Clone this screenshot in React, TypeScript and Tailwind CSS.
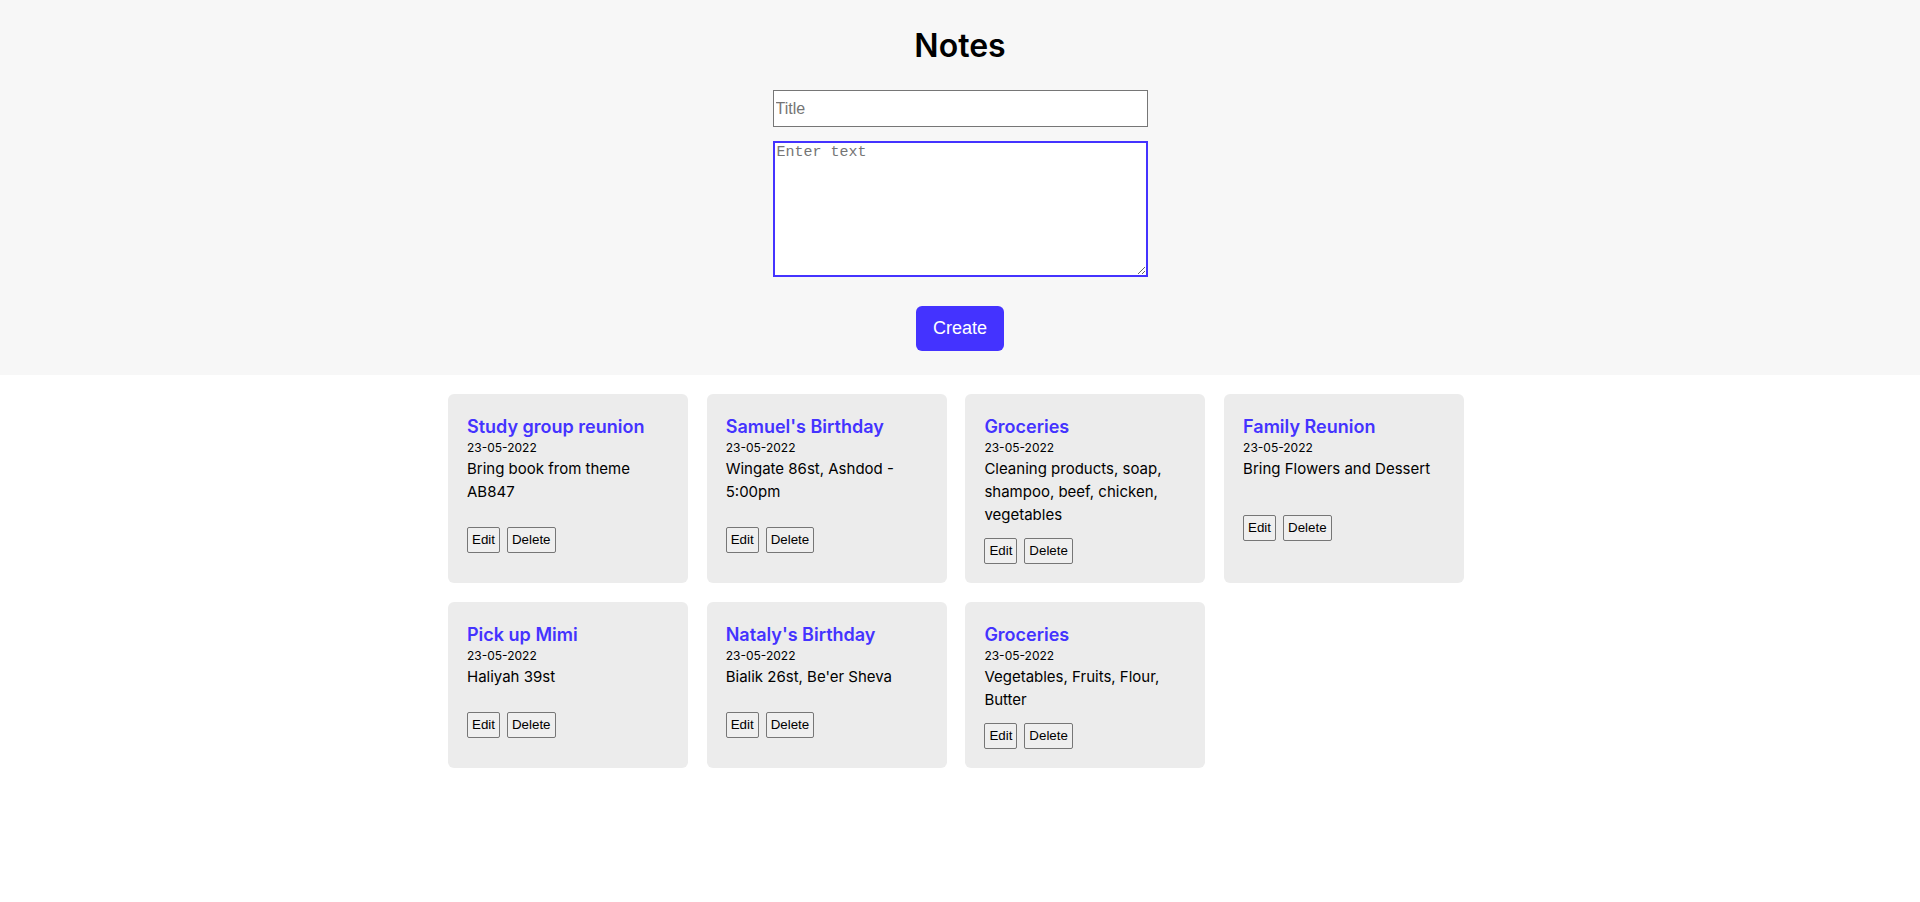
import React from 'react';

interface Note {
  id: number;
  title: string;
  date: string;
  text: string;
}

const notes: Note[] = [
  { id: 1, title: 'Study group reunion', date: '23-05-2022', text: 'Bring book from theme AB847' },
  { id: 2, title: "Samuel's Birthday", date: '23-05-2022', text: 'Wingate 86st, Ashdod - 5:00pm' },
  { id: 3, title: 'Groceries', date: '23-05-2022', text: 'Cleaning products, soap, shampoo, beef, chicken, vegetables' },
  { id: 4, title: 'Family Reunion', date: '23-05-2022', text: 'Bring Flowers and Dessert' },
  { id: 5, title: 'Pick up Mimi', date: '23-05-2022', text: 'Haliyah 39st' },
  { id: 6, title: "Nataly's Birthday", date: '23-05-2022', text: "Bialik 26st, Be'er Sheva" },
  { id: 7, title: 'Groceries', date: '23-05-2022', text: 'Vegetables, Fruits, Flour, Butter' },
];

const NoteCard: React.FC<{ note: Note }> = ({ note }) => {
  return (
    <div className="w-[240px] bg-[#ececec] rounded-[6px] px-[19px] pt-[21px] pb-[19px] flex flex-col">
      <div>
        <h3 className="text-[18px] leading-[24px] font-semibold text-[#4433ff]">{note.title}</h3>
        <p className="text-[12px] leading-[18px] text-black">{note.date}</p>
        <p className="text-[15px] leading-[23px] text-black">{note.text}</p>
      </div>
      {/* buttons sit centered in whatever space is left */}
      <div className="my-auto pt-[12px] flex gap-[7px] font-['Liberation_Sans',Arial,sans-serif]">
        <button className="h-[26px] px-[4px] text-[13.33px] text-black bg-[#efefef] border border-[#767676] rounded-[2px]">
          Edit
        </button>
        <button className="h-[26px] px-[4px] text-[13.33px] text-black bg-[#efefef] border border-[#767676] rounded-[2px]">
          Delete
        </button>
      </div>
    </div>
  );
};

export default function App() {
  return (
    <div className="min-h-screen bg-white font-['Inter','Noto_Sans',sans-serif]">
      {/* Form */}
      <div className="bg-[#f7f7f7] h-[375px] flex flex-col items-center pt-[26px]">
        <h1 className="text-[32px] leading-[40px] font-semibold text-black">Notes</h1>
        <input
          type="text"
          placeholder="Title"
          className="mt-[24px] w-[375px] h-[37px] px-[2px] bg-white border border-[#767676] text-[16px] font-['Liberation_Sans',Arial,sans-serif] placeholder:text-[#757575] outline-none"
        />
        <textarea
          placeholder="Enter text"
          className="mt-[14px] w-[375px] h-[136px] px-[2px] py-[1px] bg-white border-2 border-[#4433ff] text-[15px] leading-[18px] font-['Liberation_Mono','DejaVu_Sans_Mono',monospace] placeholder:text-[#757575] outline-none resize"
        />
        <button className="mt-[29px] w-[88px] h-[45px] rounded-[6px] bg-[#4433ff] text-white text-[18px] font-['Liberation_Sans',Arial,sans-serif]">
          Create
        </button>
      </div>

      {/* Notes list */}
      <div className="w-[1024px] mx-auto pt-[19px] flex flex-wrap gap-x-[18.7px] gap-y-[19px]">
        {notes.map((note) => (
          <NoteCard key={note.id} note={note} />
        ))}
      </div>
    </div>
  );
}
